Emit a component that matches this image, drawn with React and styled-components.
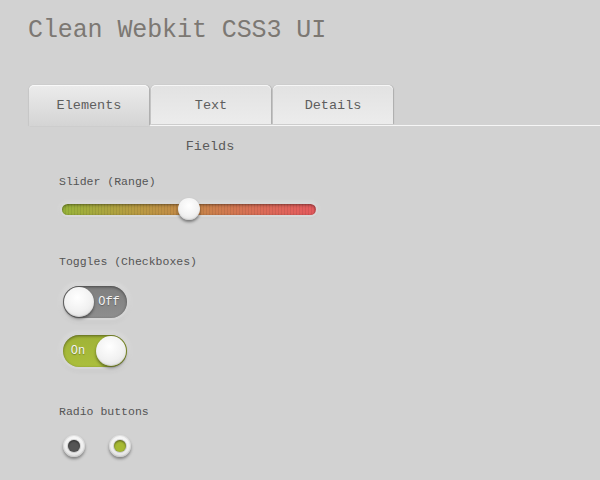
import React from 'react'
import styled, {createGlobalStyle} from 'styled-components'

const GlobalStyle = createGlobalStyle`
  html, body {
    margin: 0;
    padding: 0;
    background: #d2d2d2;
  }
  body {
    font-family: "Liberation Mono", "DejaVu Sans Mono", monospace;
    color: #5a5a5a;
  }
`

const App = () => {
    return (
        <Page>
            <GlobalStyle />
            <Title>Clean Webkit CSS3 UI</Title>
            <Tabs>
                <Tab active>Elements</Tab>
                <Tab>Text</Tab>
                <Tab>Details</Tab>
            </Tabs>
            <Panel>
                <Section>
                    <Legend>Fields</Legend>
                    <Label gap={17}>Slider (Range)</Label>
                    <Slider>
                        <Track />
                        <Thumb style={{left: '50%'}} />
                    </Slider>

                    <Label gap={34}>Toggles (Checkboxes)</Label>
                    <Toggle gap={16} on={false}>
                        <Knob />
                        <ToggleText on={false}>Off</ToggleText>
                    </Toggle>
                    <Toggle gap={17} on>
                        <ToggleText on>On</ToggleText>
                        <Knob />
                    </Toggle>

                    <Label gap={37}>Radio buttons</Label>
                    <Radios>
                        <Radio><Dot color="#555555" /></Radio>
                        <Radio><Dot color="#a7ba34" /></Radio>
                    </Radios>
                </Section>
            </Panel>
        </Page>
    )
}

const Page = styled.div`
  width: 600px;
  height: 480px;
  overflow: hidden;
`

const Title = styled.h1`
  margin: 0;
  padding: 16px 0 0 28px;
  height: 31px;
  font-size: 25px;
  line-height: 30px;
  font-weight: normal;
  color: #7c7873;
  letter-spacing: -0.1px;
`

const Tabs = styled.div`
  display: flex;
  gap: 2px;
  margin: 38px 0 -1px 29px;
  position: relative;
  z-index: 1;
`

const Tab = styled.div`
  width: 120px;
  height: ${p => (p.active ? 41 : 39)}px;
  box-sizing: border-box;
  border-radius: 5px 5px 0 0;
  display: flex;
  align-items: center;
  justify-content: center;
  padding-top: 2px;
  padding-bottom: ${p => (p.active ? 2 : 0)}px;
  font-size: 13.5px;
  color: #5e5e5e;
  background: ${p => (p.active
    ? 'linear-gradient(#ececec, #d4d4d4)'
    : 'linear-gradient(#e2e2e2, #ececec)')};
  box-shadow: 1px 0 1px rgba(0,0,0,0.18), -1px 0 1px rgba(0,0,0,0.06), inset 0 1px 0 rgba(255,255,255,0.7);
`

const Panel = styled.div`
  margin-left: 29px;
  border-top: 1px solid #f6f6f6;
`

const Section = styled.div`
  width: 362px;
  display: flex;
  flex-direction: column;
  align-items: flex-start;
  padding-left: 30px;
  box-sizing: border-box;
`

const Legend = styled.div`
  align-self: center;
  margin: 11px 0 0 -30px;
  font-size: 13.5px;
  line-height: 20px;
  color: #5a5a5a;
`

const Label = styled.div`
  font-size: 11.5px;
  line-height: 16px;
  color: #555;
  margin-top: ${p => p.gap}px;
`

const Slider = styled.div`
  position: relative;
  width: 254px;
  height: 22px;
  margin: 8px 0 0 3px;
  display: flex;
  align-items: center;
`

const Track = styled.div`
  width: 100%;
  height: 11px;
  border-radius: 6px;
  background:
    repeating-linear-gradient(90deg, rgba(0,0,0,0.07) 0 1px, transparent 1px 3px),
    linear-gradient(90deg, #98b43a 0%, #b99a42 30%, #c9834a 55%, #dc6a58 80%, #e55a5e 100%);
  box-shadow:
    inset 0 1px 3px rgba(0,0,0,0.45),
    0 0 0 2px #d8d8d8,
    0 0 4px 2px rgba(255,255,255,0.35),
    0 1px 3px 2px rgba(0,0,0,0.08);
`

const Thumb = styled.div`
  position: absolute;
  top: 0;
  width: 22px;
  height: 22px;
  margin-left: -11px;
  border-radius: 50%;
  background: radial-gradient(circle at 50% 35%, #ffffff 0%, #f2f2f2 55%, #dadada 100%);
  box-shadow: 0 2px 3px rgba(0,0,0,0.45), inset 0 -1px 1px rgba(0,0,0,0.1);
`

const Toggle = styled.div`
  width: 64px;
  height: 32px;
  box-sizing: border-box;
  border-radius: 16px;
  display: flex;
  align-items: center;
  justify-content: space-between;
  margin: ${p => p.gap}px 0 0 4px;
  background: ${p => (p.on
    ? 'linear-gradient(#9fb236, #abbf3c)'
    : 'linear-gradient(#7f7f7f, #8e8e8e)')};
  box-shadow:
    inset 0 1px 3px rgba(0,0,0,0.45),
    0 0 0 2px #d6d6d6,
    0 0 4px 3px rgba(255,255,255,0.3),
    0 2px 4px 2px rgba(0,0,0,0.08);
`

const Knob = styled.div`
  width: 30px;
  height: 30px;
  margin: 0 1px;
  border-radius: 50%;
  flex-shrink: 0;
  background: radial-gradient(circle at 45% 35%, #ffffff 0%, #f1f1f1 55%, #d9d9d9 100%);
  box-shadow: 0 2px 3px rgba(0,0,0,0.45), inset 0 -1px 1px rgba(0,0,0,0.1);
`

const ToggleText = styled.span`
  font-size: 12px;
  color: #f4f4f4;
  flex: 1;
  text-align: center;
  padding-right: ${p => (p.on ? 2 : 4)}px;
  text-shadow: 0 1px 1px rgba(0,0,0,0.3);
`

const Radios = styled.div`
  display: flex;
  gap: 24px;
  margin: 15px 0 0 4px;
`

const Radio = styled.div`
  width: 22px;
  height: 22px;
  border-radius: 50%;
  display: flex;
  align-items: center;
  justify-content: center;
  background: radial-gradient(circle at 50% 35%, #ffffff 0%, #eeeeee 55%, #c8c8c8 100%);
  box-shadow: 0 2px 3px rgba(0,0,0,0.4), inset 0 0 0 1px rgba(0,0,0,0.08);
`

const Dot = styled.div`
  width: 12px;
  height: 12px;
  border-radius: 50%;
  background: ${p => p.color};
  box-shadow: inset 0 1px 2px rgba(0,0,0,0.5), 0 0 0 1px rgba(0,0,0,0.15);
`

export default App
